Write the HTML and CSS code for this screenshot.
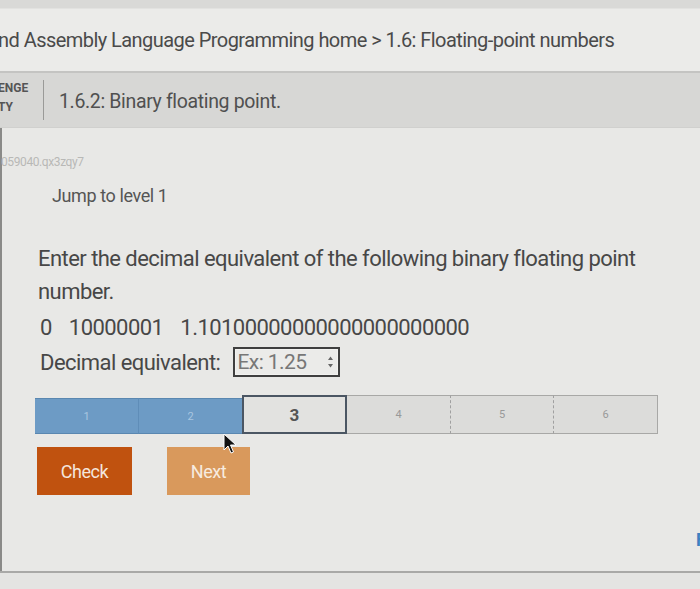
FILE: index.html
```html
<!DOCTYPE html>
<html>
<head>
<meta charset="utf-8">
<link rel="stylesheet" href="styles.css">
</head>
<body>
<div class="page">
  <header class="crumbs">
    <div class="crumbs-text">nd Assembly Language Programming home &gt; 1.6: Floating-point numbers</div>
  </header>
  <div class="subbar">
    <div class="tag"><span>ENGE</span><span>TY</span></div>
    <div class="divider"></div>
    <div class="subtitle">1.6.2: Binary floating point.</div>
  </div>
  <main class="content">
    <div class="cid">059040.qx3zqy7</div>
    <div class="jump">Jump to level 1</div>
    <div class="question">
      <p class="prompt">Enter the decimal equivalent of the following binary floating point number.</p>
      <p class="binary"><span>0</span><span>10000001</span><span>1.10100000000000000000000</span></p>
      <div class="answer">
        <span>Decimal equivalent:</span>
        <div class="input"><span class="ph">Ex: 1.25</span><span class="spin"><svg width="7" height="16" viewBox="0 0 7 16"><path d="M3.5 2.5 L6 6 H1 Z M3.5 13.5 L6 10 H1 Z" fill="#666"/></svg></span></div>
      </div>
    </div>
    <div class="levels">
      <div class="lvl done">1</div>
      <div class="lvl done">2</div>
      <div class="lvl current">3</div>
      <div class="lvl">4</div>
      <div class="lvl dashed">5</div>
      <div class="lvl dashed">6</div>
    </div>
    <div class="actions">
      <button class="btn check">Check</button>
      <button class="btn next">Next</button>
    </div>
    <div class="feedback">F</div>
    <svg class="cursor" width="14" height="22" viewBox="0 0 14 22"><path d="M1 1 L1 17 L5 13 L8 20 L10.5 19 L7.5 12 L13 12 Z" fill="#111" stroke="#fff" stroke-width="1"/></svg>
  </main>
  <div class="footer"></div>
</div>
</body>
</html>
```
FILE: styles.css
```css
html, body {
  margin: 0;
  padding: 0;
}
body {
  background: #e6e6e4;
  font-family: Roboto, "Liberation Sans", sans-serif;
  color: #444;
  width: 700px;
  height: 589px;
  overflow: hidden;
}
.page {
  display: flex;
  flex-direction: column;
  height: 589px;
}
.crumbs {
  height: 73px;
  background: linear-gradient(#d9d9d7 0, #d9d9d7 8px, #ebebe9 9px, #ebebe9 100%);
  border-bottom: 2px solid #c4c4c2;
  display: flex;
  align-items: center;
  padding-top: 8px;
  box-sizing: border-box;
  overflow: hidden;
}
.crumbs-text {
  font-size: 20px;
  letter-spacing: -0.55px;
  color: #4a4a4a;
  margin-left: -2px;
  white-space: nowrap;
}
.subbar {
  height: 54px;
  background: #d7d7d5;
  display: flex;
  align-items: center;
  border-bottom: 1px solid #d0d0ce;
}
.tag {
  width: 45px;
  display: flex;
  flex-direction: column;
  font-size: 12px;
  font-weight: bold;
  color: #555;
  line-height: 19px;
  margin-left: -2px;
  margin-top: -4px;
}
.divider {
  width: 1px;
  height: 40px;
  background: #9a9a98;
  margin-right: 15px;
}
.subtitle {
  font-size: 19.5px;
  letter-spacing: -0.35px;
  color: #505050;
  margin-top: 2px;
}
.content {
  position: relative;
  flex: 1;
  border-left: 2px solid #8a8a88;
  background: #e8e8e6;
}
.cid {
  font-size: 12px;
  color: #b8b8b6;
  margin-top: 27px;
  margin-left: -1px;
  letter-spacing: -0.4px;
}
.jump {
  font-size: 18px;
  letter-spacing: -0.4px;
  color: #555;
  margin-top: 16px;
  margin-left: 50px;
}
.question {
  margin-left: 36px;
  margin-top: 36px;
  width: 620px;
  font-size: 22px;
  letter-spacing: -0.55px;
  color: #474747;
}
.prompt {
  margin: 0;
  line-height: 33px;
}
.binary {
  margin: 5px 0 0 2px;
  line-height: 30px;
  display: flex;
  gap: 17px;
}
.answer {
  display: flex;
  align-items: center;
  gap: 13px;
  margin-top: 4px;
  margin-left: 2px;
}
.input {
  width: 97px;
  height: 26px;
  border: 2px solid #3f3f3f;
  box-shadow: inset 0 0 0 1px #f2f2f0;
  display: flex;
  align-items: center;
  justify-content: space-between;
  padding: 0 4px 0 2px;
  box-sizing: content-box;
  background: #ebebe9;
}
.ph {
  color: #777;
  font-size: 21px;
}
.spin {
  display: flex;
}
.levels {
  margin-left: 33px;
  margin-top: 18px;
  width: 623px;
  height: 39px;
  display: grid;
  grid-template-columns: 103px 104px 105px 103px 103px 105px;
  align-items: stretch;
}
.lvl {
  display: flex;
  align-items: center;
  justify-content: center;
  font-size: 11px;
  color: #999;
  background: #dcdcda;
  border-top: 1px solid #a8a8a6;
  border-bottom: 1px solid #a8a8a6;
}
.lvl:last-child {
  border-right: 1px solid #a8a8a6;
}
.lvl.dashed {
  border-left: 1px dashed #a0a0a0;
}
.lvl.done {
  background: #6d9bc5;
  color: #a9c6e0;
  border-top: 1px solid #5a87b0;
  border-bottom: 1px solid #5a87b0;
  margin-top: 3px;
}
.lvl.done + .lvl.done {
  border-left: 1px solid #5f8db8;
}
.lvl.current {
  border: 2px solid #4b5663;
  font-size: 17px;
  font-weight: bold;
  color: #555;
  background: #e2e2e0;
}
.actions {
  display: flex;
  gap: 35px;
  margin-left: 35px;
  margin-top: 13px;
}
.btn {
  font-family: Roboto, "Liberation Sans", sans-serif;
  border: none;
  height: 48px;
  font-size: 18px;
  letter-spacing: -0.4px;
  color: #f4e6dc;
  padding: 0;
}
.check {
  width: 95px;
  background: #c0520f;
}
.next {
  width: 83px;
  background: #d9995c;
  color: #f7ece0;
}
.feedback {
  position: absolute;
  right: -6px;
  top: 401px;
  font-size: 18px;
  font-weight: bold;
  color: #3f7fbf;
}
.cursor {
  position: absolute;
  left: 221px;
  top: 305px;
}
.footer {
  height: 16px;
  border-top: 2px solid #a9a9a7;
  background: #e4e4e2;
}
```
